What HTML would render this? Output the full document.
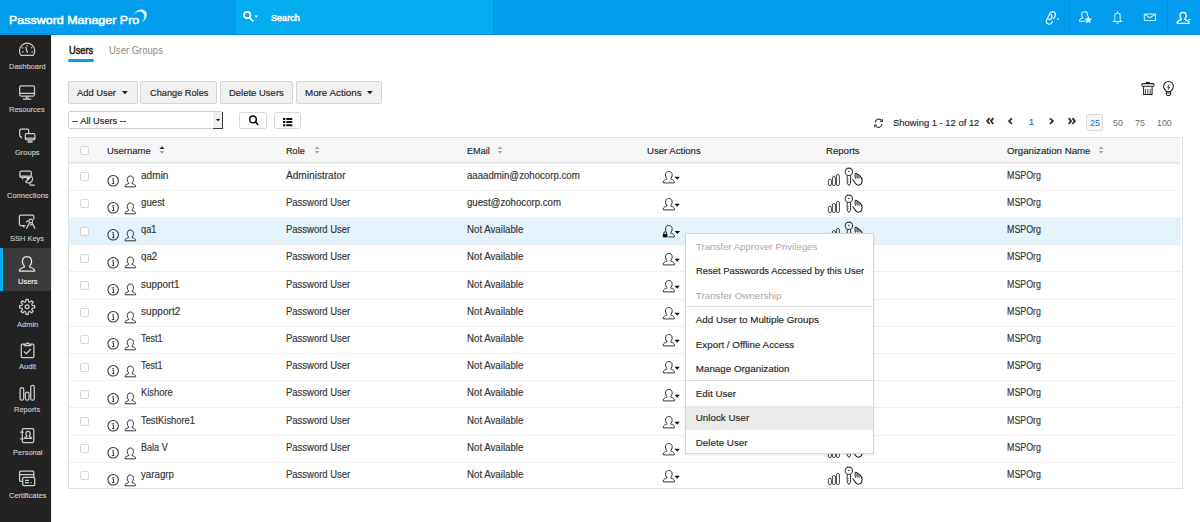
<!DOCTYPE html>
<html><head><meta charset="utf-8">
<style>
*{box-sizing:border-box;margin:0;padding:0}
html,body{width:1200px;height:522px;overflow:hidden;background:#fff;font-family:"Liberation Sans",sans-serif;color:#333}
.abs{position:absolute;white-space:nowrap}
svg{display:block}
.slab{left:0;width:51px;text-align:center;font-size:7.7px;line-height:8px}
.cb{position:absolute;width:9px;height:9px;border:1px solid #d6d6d6;border-radius:2px;background:#fff}
#menu{position:absolute;left:685px;top:233px;width:189px;height:221px;background:#fff;border:1px solid #d4d4d4;box-shadow:0 1px 2px rgba(0,0,0,.08)}
</style></head>
<body>
<div class="abs" style="left:0;top:0;width:1200px;height:35px;background:#039dee"></div>
<div class="abs" style="left:236px;top:0;width:257px;height:35px;background:#02aeef"></div>
<div class="abs" style="left:493px;top:0;width:1px;height:35px;background:#0895e0"></div>
<div class="abs" style="left:0;top:34px;width:1200px;height:1px;background:#0789dc"></div>
<div class="abs" style="left:8.70px;top:15px;font-size:11.3px;line-height:11.3px;transform:scaleX(1.1034);transform-origin:0 0;color:#fff;font-weight:normal;-webkit-text-stroke:0.5px #fff;">Password Manager Pro</div>
<svg class="abs" style="left:120px;top:0" width="40" height="35" viewBox="120 0 40 35"><path d="M133.4 14.6C135.8 10.5 141.5 8 145 10.8 148.2 13.3 147.2 18.8 142.4 22.2 144.6 18.8 145.2 15.2 142.8 12.8 140.5 10.6 136.5 11.4 133.4 14.6Z" fill="#dcf2fd"/></svg>
<svg class="abs" style="left:240px;top:8px" width="20" height="16" viewBox="240 8 20 16"><circle cx="247.2" cy="15.1" r="3.2" fill="none" stroke="#fff" stroke-width="1.6"/><path d="M249.8 17.8l3 3" stroke="#fff" stroke-width="1.9" stroke-linecap="round"/><path d="M254.5 15.6h3.2l-1.6 2.1z" fill="#fff"/></svg>
<div class="abs" style="left:271.00px;top:13px;font-size:9.8px;line-height:9.8px;transform:scaleX(0.9254);transform-origin:0 0;color:#fff;font-weight:normal;-webkit-text-stroke:0.5px #fff;">Search</div>
<!-- header right icons -->
<div class="abs" style="left:1069px;top:0;width:1px;height:34.5px;background:#0a90d8"></div>
<div class="abs" style="left:1166.5px;top:0;width:1px;height:34.5px;background:#0a90d8"></div>
<svg class="abs" style="left:1000px;top:0" width="200" height="35" viewBox="1000 0 200 35">
<g transform="translate(1050.9 17.9) rotate(28)"><path d="M2.8 -0.8V-3.9a2.8 2.8 0 0 0-5.6 0V3.9a2.8 2.8 0 0 0 5.6 0V2.5" fill="none" stroke="#fff" stroke-width="1.2" stroke-linecap="round"/><path d="M-1.2 -3.2Q1.4 -1.6 0.4 1.2 -0.4 3.2 -1.4 1.8" fill="none" stroke="#fff" stroke-width="1.1" stroke-linecap="round"/></g>
<path d="M1056.6 18.4h2.8l-1.4 1.6z" fill="#fff"/>
<path d="M1084.6 11.6c-1.8 0-2.9 1.4-2.9 3.2 0 1.2.5 2.1 1.1 2.7v.6c-1.7.6-3.3 1.2-3.3 2.5v.6h6" fill="none" stroke="#d6f0fc" stroke-width="1.05" stroke-linejoin="round"/>
<path d="M1084.6 11.6c1.8 0 2.9 1.4 2.9 3.2 0 .6-.1 1.1-.3 1.6" fill="none" stroke="#d6f0fc" stroke-width="1.05"/>
<path d="M1088.3 16l1.15 2.45 2.65.35-1.95 1.85.5 2.65-2.35-1.3-2.35 1.3.5-2.65-1.95-1.85 2.65-.35z" fill="#e4f5fd"/>
<path d="M1117.5 11.6v1M1114.8 20.4v-4.6a2.7 2.7 0 0 1 5.4 0v4.6l1.6 1H1113.2z" fill="none" stroke="#cdedfc" stroke-width="1.05" stroke-linejoin="round"/>
<path d="M1116.2 22.4a1.3 1 0 0 0 2.6 0" fill="none" stroke="#cdedfc" stroke-width="1"/>
<rect x="1144.3" y="13.9" width="11.2" height="6.6" rx=".6" fill="none" stroke="#c9ecfc" stroke-width="1.05"/>
<path d="M1144.6 14.2l5.2 3.6 5.2-3.6" fill="none" stroke="#c9ecfc" stroke-width="1.05"/>
<path d="M1183.1 12.3c-1.9 0-3.1 1.5-3.1 3.4 0 1.3.6 2.3 1.3 2.9v.9c-2 .7-4.2 1.4-4.2 3v.9h12v-.9c0-1.6-2.2-2.3-4.2-3v-.9c.7-.6 1.3-1.6 1.3-2.9 0-1.9-1.2-3.4-3.1-3.4z" fill="none" stroke="#fff" stroke-width="1.25" stroke-linejoin="round"/>
<path d="M1188.3 19.6h2.6" stroke="#fff" stroke-width="1"/>
</svg>
<div class="abs" style="left:0;top:35px;width:51px;height:487px;background:#222"></div>
<div class="abs" style="left:51px;top:34.5px;width:1px;height:488px;background:#ececec"></div>
<div class="abs" style="left:9.01px;top:63px;font-size:8.0px;line-height:8.0px;transform:scaleX(0.9350);transform-origin:0 0;color:#c9c9c9;font-weight:normal;-webkit-text-stroke:0.15px #c9c9c9;">Dashboard</div>
<div class="abs" style="left:9.42px;top:106px;font-size:8.0px;line-height:8.0px;transform:scaleX(0.9350);transform-origin:0 0;color:#c9c9c9;font-weight:normal;-webkit-text-stroke:0.15px #c9c9c9;">Resources</div>
<div class="abs" style="left:15.03px;top:149px;font-size:8.0px;line-height:8.0px;transform:scaleX(0.9350);transform-origin:0 0;color:#c9c9c9;font-weight:normal;-webkit-text-stroke:0.15px #c9c9c9;">Groups</div>
<div class="abs" style="left:6.51px;top:192px;font-size:8.0px;line-height:8.0px;transform:scaleX(0.9350);transform-origin:0 0;color:#c9c9c9;font-weight:normal;-webkit-text-stroke:0.15px #c9c9c9;">Connections</div>
<div class="abs" style="left:10.26px;top:235px;font-size:8.0px;line-height:8.0px;transform:scaleX(0.9350);transform-origin:0 0;color:#c9c9c9;font-weight:normal;-webkit-text-stroke:0.15px #c9c9c9;">SSH Keys</div>
<div class="abs" style="left:0;top:247.5px;width:51px;height:43px;background:#3b3b3b"></div>
<div class="abs" style="left:0;top:247.5px;width:3.2px;height:43px;background:#09adf0"></div>
<div class="abs" style="left:17.54px;top:278px;font-size:8.0px;line-height:8.0px;transform:scaleX(0.9350);transform-origin:0 0;color:#f4f4f4;font-weight:normal;-webkit-text-stroke:0.15px #f4f4f4;">Users</div>
<div class="abs" style="left:16.70px;top:321px;font-size:8.0px;line-height:8.0px;transform:scaleX(0.9350);transform-origin:0 0;color:#c9c9c9;font-weight:normal;-webkit-text-stroke:0.15px #c9c9c9;">Admin</div>
<div class="abs" style="left:18.77px;top:363px;font-size:8.0px;line-height:8.0px;transform:scaleX(0.9350);transform-origin:0 0;color:#c9c9c9;font-weight:normal;-webkit-text-stroke:0.15px #c9c9c9;">Audit</div>
<div class="abs" style="left:14.21px;top:406px;font-size:8.0px;line-height:8.0px;transform:scaleX(0.9350);transform-origin:0 0;color:#c9c9c9;font-weight:normal;-webkit-text-stroke:0.15px #c9c9c9;">Reports</div>
<div class="abs" style="left:12.55px;top:449px;font-size:8.0px;line-height:8.0px;transform:scaleX(0.9350);transform-origin:0 0;color:#c9c9c9;font-weight:normal;-webkit-text-stroke:0.15px #c9c9c9;">Personal</div>
<div class="abs" style="left:8.60px;top:492px;font-size:8.0px;line-height:8.0px;transform:scaleX(0.9350);transform-origin:0 0;color:#c9c9c9;font-weight:normal;-webkit-text-stroke:0.15px #c9c9c9;">Certificates</div>
<svg class="abs" style="left:0;top:0" width="51" height="522" viewBox="0 0 51 522"><path d="M21 55.3 A7.6 7.6 0 1 1 33.2 55.3 Z" fill="none" stroke="#cdcdcd" stroke-width="1.25" stroke-linecap="round" stroke-linejoin="round"/><path d="M25.9 47.4 L27.3 52.3" fill="none" stroke="#cdcdcd" stroke-width="1.25" stroke-linecap="round" stroke-linejoin="round" stroke-width="1.5"/><path d="M22.3 47.8h.6M31.3 47.8h.6M22.6 51.8h.6M31.8 51.8h.6M27.1 45.3v.5" fill="none" stroke="#cdcdcd" stroke-width="1.25" stroke-linecap="round" stroke-linejoin="round"/><rect x="19.7" y="85.9" width="14.8" height="10.2" rx="1.5" fill="none" stroke="#cdcdcd" stroke-width="1.25" stroke-linecap="round" stroke-linejoin="round"/><path d="M19.9 93.4h14.4M26.3 96.3v2M28 96.3v2M23.4 99h7.4" fill="none" stroke="#cdcdcd" stroke-width="1.25" stroke-linecap="round" stroke-linejoin="round"/><path d="M20.7 136.5 A1 1 0 0 1 19.7 135.5V130.4a1.3 1.3 0 0 1 1.3-1.3h6.4a1.3 1.3 0 0 1 1.3 1.3v2.6" fill="none" stroke="#cdcdcd" stroke-width="1.25" stroke-linecap="round" stroke-linejoin="round"/><path d="M20.8 136.6l.8 1.3" fill="none" stroke="#cdcdcd" stroke-width="1.25" stroke-linecap="round" stroke-linejoin="round"/><rect x="25.3" y="133.6" width="9.6" height="6.3" rx="1.3" fill="none" stroke="#cdcdcd" stroke-width="1.25" stroke-linecap="round" stroke-linejoin="round"/><path d="M25.5 138.2h9.2M29 140v1.8M31 140v1.8M27.8 142.2h4.5" fill="none" stroke="#cdcdcd" stroke-width="1.25" stroke-linecap="round" stroke-linejoin="round"/><rect x="19.9" y="171" width="11.4" height="6.3" rx="1.3" fill="none" stroke="#cdcdcd" stroke-width="1.25" stroke-linecap="round" stroke-linejoin="round"/><path d="M20.2 176h10.8" fill="none" stroke="#cdcdcd" stroke-width="1.25" stroke-linecap="round" stroke-linejoin="round" stroke-width="1.6"/><path d="M22.2 177.6l.6 1.4" fill="none" stroke="#cdcdcd" stroke-width="1.25" stroke-linecap="round" stroke-linejoin="round"/><path d="M31.4 176.1A4 4 0 0 1 25.7 181.8Z" fill="#222" stroke="#cdcdcd" stroke-width="1.25" stroke-linejoin="round"/><path d="M28.5 178.9L24.5 176.6" fill="none" stroke="#cdcdcd" stroke-width="1.25" stroke-linecap="round" stroke-linejoin="round"/><circle cx="28.5" cy="178.9" r=".8" fill="#eee"/><path d="M29.6 183.3l.7 1.9h4" fill="none" stroke="#cdcdcd" stroke-width="1.25" stroke-linecap="round" stroke-linejoin="round"/><path d="M25 225.5H20.6a1.2 1.2 0 0 1-1.2-1.2V216.4a1.2 1.2 0 0 1 1.2-1.2h12a1.2 1.2 0 0 1 1.2 1.2V219" fill="none" stroke="#cdcdcd" stroke-width="1.25" stroke-linecap="round" stroke-linejoin="round"/><path d="M22.5 225.5l1.6 1.6" fill="none" stroke="#cdcdcd" stroke-width="1.25" stroke-linecap="round" stroke-linejoin="round"/><circle cx="30.8" cy="221" r="1.8" fill="none" stroke="#cdcdcd" stroke-width="1.25" stroke-linecap="round" stroke-linejoin="round"/><path d="M29.6 222.6l-2.9 5.5M31.9 222.6l2.9 5.5M30.5 225.2l1.4-1" fill="none" stroke="#cdcdcd" stroke-width="1.25" stroke-linecap="round" stroke-linejoin="round"/><path d="M28 220.6l-1.5 1.4" fill="none" stroke="#cdcdcd" stroke-width="1.25" stroke-linecap="round" stroke-linejoin="round"/><path d="M27 256.7c-2.9 0-4.6 2.1-4.6 5 0 1.9.9 3.4 1.9 4.3v1c-2.6.8-4.9 1.8-4.9 3.6v.5h15.2v-.5c0-1.8-2.3-2.8-4.9-3.6v-1c1-.9 1.9-2.4 1.9-4.3 0-2.9-1.7-5-4.6-5z" fill="none" stroke="#e8e8e8" stroke-width="1.3" stroke-linejoin="round"/><path d="M25.76 301.57 L25.96 299.29 L28.24 299.29 L28.44 301.57 L29.85 302.15 L31.61 300.68 L33.22 302.29 L31.75 304.05 L32.33 305.46 L34.61 305.66 L34.61 307.94 L32.33 308.14 L31.75 309.55 L33.22 311.31 L31.61 312.92 L29.85 311.45 L28.44 312.03 L28.24 314.31 L25.96 314.31 L25.76 312.03 L24.35 311.45 L22.59 312.92 L20.98 311.31 L22.45 309.55 L21.87 308.14 L19.59 307.94 L19.59 305.66 L21.87 305.46 L22.45 304.05 L20.98 302.29 L22.59 300.68 L24.35 302.15Z" fill="none" stroke="#cdcdcd" stroke-width="1.25" stroke-linecap="round" stroke-linejoin="round"/><circle cx="27.1" cy="306.8" r="1.9" fill="none" stroke="#cdcdcd" stroke-width="1.25" stroke-linecap="round" stroke-linejoin="round"/><path d="M24.3 344.2h-2a1 1 0 0 0-1 1v11.3a1 1 0 0 0 1 1h10.6a1 1 0 0 0 1-1V345.2a1 1 0 0 0-1-1h-2" fill="none" stroke="#cdcdcd" stroke-width="1.25" stroke-linecap="round" stroke-linejoin="round"/><path d="M24.3 345.5V344.2h1.8l1.5-1.5 1.5 1.5h1.8v1.3z" fill="none" stroke="#cdcdcd" stroke-width="1.25" stroke-linecap="round" stroke-linejoin="round"/><path d="M24.2 351.8l2.1 1.9 4.1-4.2" fill="none" stroke="#cdcdcd" stroke-width="1.25" stroke-linecap="round" stroke-linejoin="round"/><rect x="20.1" y="387.6" width="3.6" height="12.6" rx="1.8" fill="none" stroke="#cdcdcd" stroke-width="1.25" stroke-linecap="round" stroke-linejoin="round"/><rect x="25.4" y="392" width="3.6" height="8.2" rx="1.8" fill="none" stroke="#cdcdcd" stroke-width="1.25" stroke-linecap="round" stroke-linejoin="round"/><rect x="30.7" y="385.3" width="3.6" height="14.9" rx="1.8" fill="none" stroke="#cdcdcd" stroke-width="1.25" stroke-linecap="round" stroke-linejoin="round"/><rect x="22.3" y="428.5" width="11.5" height="14" rx="1.2" fill="none" stroke="#cdcdcd" stroke-width="1.25" stroke-linecap="round" stroke-linejoin="round"/><path d="M20.6 432h2.6M20.6 438.8h2.6" fill="none" stroke="#cdcdcd" stroke-width="1.25" stroke-linecap="round" stroke-linejoin="round"/><path d="M28.1 431.4c-1.4 0-2.2 1-2.2 2.4 0 .9.4 1.6.9 2v.8c-1.2.4-2.3.9-2.3 1.8h7.2c0-.9-1.1-1.4-2.3-1.8v-.8c.5-.4.9-1.1.9-2 0-1.4-.8-2.4-2.2-2.4z" fill="none" stroke="#cdcdcd" stroke-width="1.25" stroke-linecap="round" stroke-linejoin="round"/><path d="M21.8 481.4h-1.2a1 1 0 0 1-1-1V472a1 1 0 0 1 1-1h12.2a1 1 0 0 1 1 1v5.2" fill="none" stroke="#cdcdcd" stroke-width="1.25" stroke-linecap="round" stroke-linejoin="round"/><path d="M19.8 474.6h13.8" fill="none" stroke="#cdcdcd" stroke-width="1.25" stroke-linecap="round" stroke-linejoin="round" stroke-width="1.6"/><rect x="22.7" y="477.4" width="12" height="8.1" rx="1" fill="none" stroke="#cdcdcd" stroke-width="1.25" stroke-linecap="round" stroke-linejoin="round"/><path d="M25.5 480.3h3M25.5 482.6h3" fill="none" stroke="#cdcdcd" stroke-width="1.25" stroke-linecap="round" stroke-linejoin="round"/><circle cx="31.2" cy="482.6" r=".7" fill="#cdcdcd"/></svg>
<div class="abs" style="left:68.80px;top:46px;font-size:10.2px;line-height:10.2px;transform:scaleX(0.9090);transform-origin:0 0;color:#1e1e1e;font-weight:normal;-webkit-text-stroke:0.5px #1e1e1e;">Users</div>
<div class="abs" style="left:68px;top:58.6px;width:26px;height:3px;border-radius:1.5px;background:#0b9ae8"></div>
<div class="abs" style="left:109.00px;top:46px;font-size:10.2px;line-height:10.2px;transform:scaleX(0.9337);transform-origin:0 0;color:#8a8a8a;font-weight:normal;">User Groups</div>
<div class="abs" style="left:68px;top:81.2px;width:69.7px;height:22.5px;background:#f0f0f0;border:1px solid #d5d5d5;border-radius:2px"></div>
<div class="abs" style="left:77.30px;top:88px;font-size:9.8px;line-height:9.8px;transform:scaleX(0.9543);transform-origin:0 0;color:#222;font-weight:normal;-webkit-text-stroke:0.15px #222;">Add User</div>
<svg class="abs" style="left:122.3px;top:91px" width="6" height="4" viewBox="0 0 6 4"><path d="M0 0h5.8L2.9 3.3z" fill="#1a1a1a"/></svg>
<div class="abs" style="left:140.2px;top:81.2px;width:76.5px;height:22.5px;background:#f0f0f0;border:1px solid #d5d5d5;border-radius:2px"></div>
<div class="abs" style="left:149.50px;top:88px;font-size:9.8px;line-height:9.8px;transform:scaleX(0.9399);transform-origin:0 0;color:#222;font-weight:normal;-webkit-text-stroke:0.15px #222;">Change Roles</div>
<div class="abs" style="left:220px;top:81.2px;width:73px;height:22.5px;background:#f0f0f0;border:1px solid #d5d5d5;border-radius:2px"></div>
<div class="abs" style="left:229.00px;top:88px;font-size:9.8px;line-height:9.8px;transform:scaleX(0.9674);transform-origin:0 0;color:#222;font-weight:normal;-webkit-text-stroke:0.15px #222;">Delete Users</div>
<div class="abs" style="left:296px;top:81.2px;width:86.4px;height:22.5px;background:#f0f0f0;border:1px solid #d5d5d5;border-radius:2px"></div>
<div class="abs" style="left:305.00px;top:88px;font-size:9.8px;line-height:9.8px;color:#222;font-weight:normal;-webkit-text-stroke:0.15px #222;">More Actions</div>
<svg class="abs" style="left:367.2px;top:91px" width="6" height="4" viewBox="0 0 6 4"><path d="M0 0h5.8L2.9 3.3z" fill="#1a1a1a"/></svg>
<div class="abs" style="left:68px;top:110.6px;width:155px;height:18.7px;border:1px solid #cfcfcf;border-radius:2px;background:#fff"></div>
<div class="abs" style="left:71.70px;top:117px;font-size:9.3px;line-height:9.3px;transform:scaleX(0.9951);transform-origin:0 0;color:#222;font-weight:normal;-webkit-text-stroke:0.15px #222;">-- All Users --</div>
<div class="abs" style="left:212.5px;top:111.5px;width:10.5px;height:17.5px;border-right:1.3px solid #3a3a3a;border-bottom:1.3px solid #3a3a3a;background:#efefef"></div>
<svg class="abs" style="left:215.5px;top:118.7px" width="5" height="3" viewBox="0 0 5 3"><path d="M0 0h4.2L2.1 2.2z" fill="#111"/></svg>
<div class="abs" style="left:239.4px;top:112px;width:28px;height:17px;border:1px solid #d8d8d8;border-radius:2.5px;background:#fff"></div>
<svg class="abs" style="left:247px;top:113px" width="14" height="14" viewBox="247 113 14 14"><circle cx="253" cy="119.4" r="3.3" fill="none" stroke="#111" stroke-width="1.5"/><path d="M255.4 121.8l2.3 2.6" stroke="#111" stroke-width="1.6" stroke-linecap="round"/></svg>
<div class="abs" style="left:274.3px;top:112px;width:27.1px;height:17px;border:1px solid #d8d8d8;border-radius:2.5px;background:#fff"></div>
<svg class="abs" style="left:280px;top:115px" width="15" height="14" viewBox="280 115 15 14"><path d="M283 118h2.3v2h-2.3zM283 121.1h2.3v2h-2.3zM283 124.2h2.3v2h-2.3zM286.3 118h6v2h-6zM286.3 121.1h6v2h-6zM286.3 124.2h6v2h-6z" fill="#111"/></svg>
<svg class="abs" style="left:1138px;top:78px" width="40" height="20" viewBox="1138 78 40 20"><rect x="1141.8" y="83.6" width="12.3" height="2.6" rx="1.2" fill="none" stroke="#222" stroke-width="1.05"/><rect x="1146" y="82" width="3.7" height="1.6" fill="#111"/><path d="M1143.6 86.5v8h8.5v-8" fill="none" stroke="#222" stroke-width="1.05" stroke-linejoin="round"/><path d="M1145.5 89v5M1147.85 89v5M1150.2 89v5" stroke="#555" stroke-width="1"/><path d="M1166.3 91.4c-.4-1.2-2.7-2.3-2.7-5a4.9 4.9 0 0 1 9.8 0c0 2.7-2.3 3.8-2.7 5z" fill="none" stroke="#222" stroke-width="1.05" stroke-linejoin="round"/><path d="M1166.3 91.4v2.7a1.3 1.3 0 0 0 1.3 1.3h1.8a1.3 1.3 0 0 0 1.3-1.3v-2.7M1166.3 93h4.4" fill="none" stroke="#222" stroke-width="1.05"/><path d="M1169.3 84.6l-1.6 2.6h1.8l-1.3 2.4" fill="none" stroke="#222" stroke-width="1"/></svg>
<svg class="abs" style="left:872px;top:116px" width="14" height="14" viewBox="872 116 14 14"><path d="M875.2 122.5a3.6 3.6 0 0 1 6.4-2M882 124a3.6 3.6 0 0 1-6.4 2" fill="none" stroke="#333" stroke-width="1.15"/><path d="M882.3 119v2.3h-2.3M874.7 127.3v-2.3h2.3" fill="none" stroke="#333" stroke-width="1.15"/></svg>
<div class="abs" style="left:892.80px;top:118px;font-size:9.8px;line-height:9.8px;transform:scaleX(0.9609);transform-origin:0 0;color:#262626;font-weight:normal;-webkit-text-stroke:0.15px #262626;">Showing 1 - 12 of 12</div>
<svg class="abs" style="left:984px;top:114px" width="96" height="14" viewBox="984 114 96 14"><path d="M989.6 118.2l-2.4 2.9 2.4 2.9M993.3 118.2l-2.4 2.9 2.4 2.9" fill="none" stroke="#333" stroke-width="1.9"/><path d="M1012 118.3l-3 2.8 3 2.8" fill="none" stroke="#333" stroke-width="1.8"/><path d="M1049.9 118.3l3 2.8-3 2.8" fill="none" stroke="#333" stroke-width="1.8"/><path d="M1068.7 118.2l2.4 2.9-2.4 2.9M1072.4 118.2l2.4 2.9-2.4 2.9" fill="none" stroke="#333" stroke-width="1.9"/></svg>
<div class="abs" style="left:1029.00px;top:118px;font-size:9px;line-height:9px;color:#2677bf;font-weight:normal;-webkit-text-stroke:0.2px #2677bf;">1</div>
<div class="abs" style="left:1085.6px;top:114px;width:17.7px;height:16.7px;border:1px solid #d9d9d9;border-radius:2px;background:#f6f6f6"></div>
<div class="abs" style="left:1090.00px;top:118px;font-size:9.5px;line-height:9.5px;transform:scaleX(0.9483);transform-origin:0 0;color:#2677bf;font-weight:normal;">25</div>
<div class="abs" style="left:1112.70px;top:118px;font-size:9.5px;line-height:9.5px;transform:scaleX(0.9483);transform-origin:0 0;color:#6f6f6f;font-weight:normal;">50</div>
<div class="abs" style="left:1134.70px;top:118px;font-size:9.5px;line-height:9.5px;transform:scaleX(0.9483);transform-origin:0 0;color:#6f6f6f;font-weight:normal;">75</div>
<div class="abs" style="left:1157.30px;top:118px;font-size:9.5px;line-height:9.5px;transform:scaleX(0.9266);transform-origin:0 0;color:#6f6f6f;font-weight:normal;">100</div>
<div class="abs" style="left:68.5px;top:137px;width:1111px;height:25.5px;background:#f6f6f6"></div>
<div class="abs" style="left:68.5px;top:162.50px;width:1111px;height:27.2px;background:#fff;border-top:1px solid #efefef"></div>
<div class="abs" style="left:68.5px;top:189.70px;width:1111px;height:27.2px;background:#fff;border-top:1px solid #efefef"></div>
<div class="abs" style="left:68.5px;top:216.90px;width:1112.5px;height:27.2px;background:#e4f3fb;border-top:1px solid #efefef"></div>
<div class="abs" style="left:68.5px;top:244.10px;width:1111px;height:27.2px;background:#fff;border-top:1px solid #efefef"></div>
<div class="abs" style="left:68.5px;top:271.30px;width:1111px;height:27.2px;background:#fff;border-top:1px solid #efefef"></div>
<div class="abs" style="left:68.5px;top:298.50px;width:1111px;height:27.2px;background:#fff;border-top:1px solid #efefef"></div>
<div class="abs" style="left:68.5px;top:325.70px;width:1111px;height:27.2px;background:#fff;border-top:1px solid #efefef"></div>
<div class="abs" style="left:68.5px;top:352.90px;width:1111px;height:27.2px;background:#fff;border-top:1px solid #efefef"></div>
<div class="abs" style="left:68.5px;top:380.10px;width:1111px;height:27.2px;background:#fff;border-top:1px solid #efefef"></div>
<div class="abs" style="left:68.5px;top:407.30px;width:1111px;height:27.2px;background:#fff;border-top:1px solid #efefef"></div>
<div class="abs" style="left:68.5px;top:434.50px;width:1111px;height:27.2px;background:#fff;border-top:1px solid #efefef"></div>
<div class="abs" style="left:68.5px;top:461.70px;width:1111px;height:27.2px;background:#fff;border-top:1px solid #efefef"></div>
<div class="cb" style="left:79.5px;top:172.10px"></div>
<div class="abs" style="left:107.3px;top:175.00px"><svg width="13" height="13" viewBox="0 0 13 13"><circle cx="6.15" cy="5.8" r="5.25" fill="none" stroke="#333" stroke-width="1.05"/><circle cx="6.15" cy="3.4" r=".7" fill="#333"/><path d="M5.3 4.9h1.1v3.6M5.1 8.6h2.3" fill="none" stroke="#333" stroke-width="1"/></svg></div>
<div class="abs" style="left:123.7px;top:174.50px"><svg width="13" height="13" viewBox="0 0 13 13"><path d="M6.35 1C4.4 1 3.2 2.6 3.2 4.6 3.2 6 3.8 7.2 4.6 7.9V8.6C2.6 9.2 1 10 1 11.3V11.8H11.7V11.3C11.7 10 10.1 9.2 8.1 8.6V7.9C8.9 7.2 9.5 6 9.5 4.6 9.5 2.6 8.3 1 6.35 1Z" fill="none" stroke="#333" stroke-width="1" stroke-linejoin="round"/></svg></div>
<div class="abs" style="left:140.60px;top:171px;font-size:10.0px;line-height:10.0px;transform:scaleX(1.0092);transform-origin:0 0;color:#333;font-weight:normal;-webkit-text-stroke:0.15px #333;">admin</div>
<div class="abs" style="left:286.40px;top:171px;font-size:10.0px;line-height:10.0px;transform:scaleX(1.0102);transform-origin:0 0;color:#333;font-weight:normal;-webkit-text-stroke:0.15px #333;">Administrator</div>
<div class="abs" style="left:466.60px;top:171px;font-size:10.0px;line-height:10.0px;transform:scaleX(0.9641);transform-origin:0 0;color:#333;font-weight:normal;-webkit-text-stroke:0.15px #333;">aaaadmin@zohocorp.com</div>
<div class="abs" style="left:662px;top:170.00px"><svg width="20" height="15" viewBox="0 0 20 15"><path d="M6.6 1.5C4.6 1.5 3.5 3.1 3.5 5.1 3.5 6.5 4.1 7.7 4.9 8.4V9.1C2.9 9.7 1.3 10.5 1.3 11.8V12.9H12.4V11.8C12.4 10.5 10.8 9.7 8.8 9.1V8.4C9.6 7.7 10.2 6.5 10.2 5.1 10.2 3.1 9.1 1.5 6.6 1.5Z" fill="none" stroke="#333" stroke-width="1" stroke-linejoin="round"/><path d="M12.5 6.8h5.3l-2.65 3z" fill="#111"/></svg></div>
<div class="abs" style="left:826.8px;top:167.00px"><svg width="40" height="22" viewBox="0 0 40 22"><rect x="1.4" y="12.3" width="3" height="6.3" rx="1.5" fill="none" stroke="#444" stroke-width="1"/><rect x="5.4" y="9.5" width="3" height="9.1" rx="1.5" fill="none" stroke="#444" stroke-width="1"/><rect x="9.4" y="7.5" width="3" height="11.1" rx="1.5" fill="none" stroke="#444" stroke-width="1"/><circle cx="21.9" cy="4.8" r="3.7" fill="none" stroke="#333" stroke-width="1.05"/><circle cx="21.8" cy="4.5" r=".75" fill="#333"/><path d="M20.2 8.5v7.6l1.7 2.4 1.7-2.4V8.5" fill="none" stroke="#333" stroke-width="1"/><path d="M21.5 12v1.2M21.5 14.4v1.2" stroke="#999" stroke-width=".9"/><path d="M25.6 12.3L28.6 16.6Q29.8 18.2 31.4 18.2Q35.1 18.2 35.1 13.6Q35.1 10.4 32.7 8.7L29.8 6.7Q28.2 5.8 28 7.4L28.4 11.6" fill="#fff" stroke="#222" stroke-width="1.05" stroke-linejoin="round"/><path d="M28.6 7.2L32.6 9.2 33.2 11.6 29 11.2z" fill="#aaa"/><path d="M29.8 7.6l.6 3.4M31.6 8.6l.6 2.8" stroke="#555" stroke-width=".8"/></svg></div>
<div class="abs" style="left:1007.00px;top:171px;font-size:10.0px;line-height:10.0px;transform:scaleX(0.8866);transform-origin:0 0;color:#333;font-weight:normal;-webkit-text-stroke:0.15px #333;">MSPOrg</div>
<div class="cb" style="left:79.5px;top:199.30px"></div>
<div class="abs" style="left:107.3px;top:202.20px"><svg width="13" height="13" viewBox="0 0 13 13"><circle cx="6.15" cy="5.8" r="5.25" fill="none" stroke="#333" stroke-width="1.05"/><circle cx="6.15" cy="3.4" r=".7" fill="#333"/><path d="M5.3 4.9h1.1v3.6M5.1 8.6h2.3" fill="none" stroke="#333" stroke-width="1"/></svg></div>
<div class="abs" style="left:123.7px;top:201.70px"><svg width="13" height="13" viewBox="0 0 13 13"><path d="M6.35 1C4.4 1 3.2 2.6 3.2 4.6 3.2 6 3.8 7.2 4.6 7.9V8.6C2.6 9.2 1 10 1 11.3V11.8H11.7V11.3C11.7 10 10.1 9.2 8.1 8.6V7.9C8.9 7.2 9.5 6 9.5 4.6 9.5 2.6 8.3 1 6.35 1Z" fill="none" stroke="#333" stroke-width="1" stroke-linejoin="round"/></svg></div>
<div class="abs" style="left:140.60px;top:198px;font-size:10.0px;line-height:10.0px;transform:scaleX(0.9734);transform-origin:0 0;color:#333;font-weight:normal;-webkit-text-stroke:0.15px #333;">guest</div>
<div class="abs" style="left:286.40px;top:198px;font-size:10.0px;line-height:10.0px;transform:scaleX(0.9469);transform-origin:0 0;color:#333;font-weight:normal;-webkit-text-stroke:0.15px #333;">Password User</div>
<div class="abs" style="left:466.60px;top:198px;font-size:10.0px;line-height:10.0px;transform:scaleX(0.9651);transform-origin:0 0;color:#333;font-weight:normal;-webkit-text-stroke:0.15px #333;">guest@zohocorp.com</div>
<div class="abs" style="left:662px;top:197.20px"><svg width="20" height="15" viewBox="0 0 20 15"><path d="M6.6 1.5C4.6 1.5 3.5 3.1 3.5 5.1 3.5 6.5 4.1 7.7 4.9 8.4V9.1C2.9 9.7 1.3 10.5 1.3 11.8V12.9H12.4V11.8C12.4 10.5 10.8 9.7 8.8 9.1V8.4C9.6 7.7 10.2 6.5 10.2 5.1 10.2 3.1 9.1 1.5 6.6 1.5Z" fill="none" stroke="#333" stroke-width="1" stroke-linejoin="round"/><path d="M12.5 6.8h5.3l-2.65 3z" fill="#111"/></svg></div>
<div class="abs" style="left:826.8px;top:194.20px"><svg width="40" height="22" viewBox="0 0 40 22"><rect x="1.4" y="12.3" width="3" height="6.3" rx="1.5" fill="none" stroke="#444" stroke-width="1"/><rect x="5.4" y="9.5" width="3" height="9.1" rx="1.5" fill="none" stroke="#444" stroke-width="1"/><rect x="9.4" y="7.5" width="3" height="11.1" rx="1.5" fill="none" stroke="#444" stroke-width="1"/><circle cx="21.9" cy="4.8" r="3.7" fill="none" stroke="#333" stroke-width="1.05"/><circle cx="21.8" cy="4.5" r=".75" fill="#333"/><path d="M20.2 8.5v7.6l1.7 2.4 1.7-2.4V8.5" fill="none" stroke="#333" stroke-width="1"/><path d="M21.5 12v1.2M21.5 14.4v1.2" stroke="#999" stroke-width=".9"/><path d="M25.6 12.3L28.6 16.6Q29.8 18.2 31.4 18.2Q35.1 18.2 35.1 13.6Q35.1 10.4 32.7 8.7L29.8 6.7Q28.2 5.8 28 7.4L28.4 11.6" fill="#fff" stroke="#222" stroke-width="1.05" stroke-linejoin="round"/><path d="M28.6 7.2L32.6 9.2 33.2 11.6 29 11.2z" fill="#aaa"/><path d="M29.8 7.6l.6 3.4M31.6 8.6l.6 2.8" stroke="#555" stroke-width=".8"/></svg></div>
<div class="abs" style="left:1007.00px;top:198px;font-size:10.0px;line-height:10.0px;transform:scaleX(0.8866);transform-origin:0 0;color:#333;font-weight:normal;-webkit-text-stroke:0.15px #333;">MSPOrg</div>
<div class="cb" style="left:79.5px;top:226.50px"></div>
<div class="abs" style="left:107.3px;top:229.40px"><svg width="13" height="13" viewBox="0 0 13 13"><circle cx="6.15" cy="5.8" r="5.25" fill="none" stroke="#333" stroke-width="1.05"/><circle cx="6.15" cy="3.4" r=".7" fill="#333"/><path d="M5.3 4.9h1.1v3.6M5.1 8.6h2.3" fill="none" stroke="#333" stroke-width="1"/></svg></div>
<div class="abs" style="left:123.7px;top:228.90px"><svg width="13" height="13" viewBox="0 0 13 13"><path d="M6.35 1C4.4 1 3.2 2.6 3.2 4.6 3.2 6 3.8 7.2 4.6 7.9V8.6C2.6 9.2 1 10 1 11.3V11.8H11.7V11.3C11.7 10 10.1 9.2 8.1 8.6V7.9C8.9 7.2 9.5 6 9.5 4.6 9.5 2.6 8.3 1 6.35 1Z" fill="none" stroke="#333" stroke-width="1" stroke-linejoin="round"/></svg></div>
<div class="abs" style="left:140.60px;top:225px;font-size:10.0px;line-height:10.0px;transform:scaleX(0.9222);transform-origin:0 0;color:#333;font-weight:normal;-webkit-text-stroke:0.15px #333;">qa1</div>
<div class="abs" style="left:286.40px;top:225px;font-size:10.0px;line-height:10.0px;transform:scaleX(0.9469);transform-origin:0 0;color:#333;font-weight:normal;-webkit-text-stroke:0.15px #333;">Password User</div>
<div class="abs" style="left:466.60px;top:225px;font-size:10.0px;line-height:10.0px;transform:scaleX(0.9691);transform-origin:0 0;color:#333;font-weight:normal;-webkit-text-stroke:0.15px #333;">Not Available</div>
<div class="abs" style="left:662px;top:224.40px"><svg width="20" height="15" viewBox="0 0 20 15"><path d="M6.6 1.5C4.6 1.5 3.5 3.1 3.5 5.1 3.5 6.5 4.1 7.7 4.9 8.4V9.1C2.9 9.7 1.3 10.5 1.3 11.8V12.9H12.4V11.8C12.4 10.5 10.8 9.7 8.8 9.1V8.4C9.6 7.7 10.2 6.5 10.2 5.1 10.2 3.1 9.1 1.5 6.6 1.5Z" fill="none" stroke="#333" stroke-width="1" stroke-linejoin="round"/><rect x="0" y="7.6" width="6.6" height="6" fill="#e4f3fb"/><path d="M1.9 10v-1a1.3 1.3 0 0 1 2.6 0v1" fill="none" stroke="#111" stroke-width="1"/><rect x=".8" y="10" width="4.7" height="3.3" rx=".3" fill="#111"/><path d="M12.6 7.1h5.6l-2.8 3z" fill="#111"/></svg></div>
<div class="abs" style="left:826.8px;top:221.40px"><svg width="40" height="22" viewBox="0 0 40 22"><rect x="1.4" y="12.3" width="3" height="6.3" rx="1.5" fill="none" stroke="#444" stroke-width="1"/><rect x="5.4" y="9.5" width="3" height="9.1" rx="1.5" fill="none" stroke="#444" stroke-width="1"/><rect x="9.4" y="7.5" width="3" height="11.1" rx="1.5" fill="none" stroke="#444" stroke-width="1"/><circle cx="21.9" cy="4.8" r="3.7" fill="none" stroke="#333" stroke-width="1.05"/><circle cx="21.8" cy="4.5" r=".75" fill="#333"/><path d="M20.2 8.5v7.6l1.7 2.4 1.7-2.4V8.5" fill="none" stroke="#333" stroke-width="1"/><path d="M21.5 12v1.2M21.5 14.4v1.2" stroke="#999" stroke-width=".9"/><path d="M25.6 12.3L28.6 16.6Q29.8 18.2 31.4 18.2Q35.1 18.2 35.1 13.6Q35.1 10.4 32.7 8.7L29.8 6.7Q28.2 5.8 28 7.4L28.4 11.6" fill="#fff" stroke="#222" stroke-width="1.05" stroke-linejoin="round"/><path d="M28.6 7.2L32.6 9.2 33.2 11.6 29 11.2z" fill="#aaa"/><path d="M29.8 7.6l.6 3.4M31.6 8.6l.6 2.8" stroke="#555" stroke-width=".8"/></svg></div>
<div class="abs" style="left:1007.00px;top:225px;font-size:10.0px;line-height:10.0px;transform:scaleX(0.8866);transform-origin:0 0;color:#333;font-weight:normal;-webkit-text-stroke:0.15px #333;">MSPOrg</div>
<div class="cb" style="left:79.5px;top:253.70px"></div>
<div class="abs" style="left:107.3px;top:256.60px"><svg width="13" height="13" viewBox="0 0 13 13"><circle cx="6.15" cy="5.8" r="5.25" fill="none" stroke="#333" stroke-width="1.05"/><circle cx="6.15" cy="3.4" r=".7" fill="#333"/><path d="M5.3 4.9h1.1v3.6M5.1 8.6h2.3" fill="none" stroke="#333" stroke-width="1"/></svg></div>
<div class="abs" style="left:123.7px;top:256.10px"><svg width="13" height="13" viewBox="0 0 13 13"><path d="M6.35 1C4.4 1 3.2 2.6 3.2 4.6 3.2 6 3.8 7.2 4.6 7.9V8.6C2.6 9.2 1 10 1 11.3V11.8H11.7V11.3C11.7 10 10.1 9.2 8.1 8.6V7.9C8.9 7.2 9.5 6 9.5 4.6 9.5 2.6 8.3 1 6.35 1Z" fill="none" stroke="#333" stroke-width="1" stroke-linejoin="round"/></svg></div>
<div class="abs" style="left:140.60px;top:252px;font-size:10.0px;line-height:10.0px;transform:scaleX(0.9760);transform-origin:0 0;color:#333;font-weight:normal;-webkit-text-stroke:0.15px #333;">qa2</div>
<div class="abs" style="left:286.40px;top:252px;font-size:10.0px;line-height:10.0px;transform:scaleX(0.9469);transform-origin:0 0;color:#333;font-weight:normal;-webkit-text-stroke:0.15px #333;">Password User</div>
<div class="abs" style="left:466.60px;top:252px;font-size:10.0px;line-height:10.0px;transform:scaleX(0.9691);transform-origin:0 0;color:#333;font-weight:normal;-webkit-text-stroke:0.15px #333;">Not Available</div>
<div class="abs" style="left:662px;top:251.60px"><svg width="20" height="15" viewBox="0 0 20 15"><path d="M6.6 1.5C4.6 1.5 3.5 3.1 3.5 5.1 3.5 6.5 4.1 7.7 4.9 8.4V9.1C2.9 9.7 1.3 10.5 1.3 11.8V12.9H12.4V11.8C12.4 10.5 10.8 9.7 8.8 9.1V8.4C9.6 7.7 10.2 6.5 10.2 5.1 10.2 3.1 9.1 1.5 6.6 1.5Z" fill="none" stroke="#333" stroke-width="1" stroke-linejoin="round"/><path d="M12.5 6.8h5.3l-2.65 3z" fill="#111"/></svg></div>
<div class="abs" style="left:826.8px;top:248.60px"><svg width="40" height="22" viewBox="0 0 40 22"><rect x="1.4" y="12.3" width="3" height="6.3" rx="1.5" fill="none" stroke="#444" stroke-width="1"/><rect x="5.4" y="9.5" width="3" height="9.1" rx="1.5" fill="none" stroke="#444" stroke-width="1"/><rect x="9.4" y="7.5" width="3" height="11.1" rx="1.5" fill="none" stroke="#444" stroke-width="1"/><circle cx="21.9" cy="4.8" r="3.7" fill="none" stroke="#333" stroke-width="1.05"/><circle cx="21.8" cy="4.5" r=".75" fill="#333"/><path d="M20.2 8.5v7.6l1.7 2.4 1.7-2.4V8.5" fill="none" stroke="#333" stroke-width="1"/><path d="M21.5 12v1.2M21.5 14.4v1.2" stroke="#999" stroke-width=".9"/><path d="M25.6 12.3L28.6 16.6Q29.8 18.2 31.4 18.2Q35.1 18.2 35.1 13.6Q35.1 10.4 32.7 8.7L29.8 6.7Q28.2 5.8 28 7.4L28.4 11.6" fill="#fff" stroke="#222" stroke-width="1.05" stroke-linejoin="round"/><path d="M28.6 7.2L32.6 9.2 33.2 11.6 29 11.2z" fill="#aaa"/><path d="M29.8 7.6l.6 3.4M31.6 8.6l.6 2.8" stroke="#555" stroke-width=".8"/></svg></div>
<div class="abs" style="left:1007.00px;top:252px;font-size:10.0px;line-height:10.0px;transform:scaleX(0.8866);transform-origin:0 0;color:#333;font-weight:normal;-webkit-text-stroke:0.15px #333;">MSPOrg</div>
<div class="cb" style="left:79.5px;top:280.90px"></div>
<div class="abs" style="left:107.3px;top:283.80px"><svg width="13" height="13" viewBox="0 0 13 13"><circle cx="6.15" cy="5.8" r="5.25" fill="none" stroke="#333" stroke-width="1.05"/><circle cx="6.15" cy="3.4" r=".7" fill="#333"/><path d="M5.3 4.9h1.1v3.6M5.1 8.6h2.3" fill="none" stroke="#333" stroke-width="1"/></svg></div>
<div class="abs" style="left:123.7px;top:283.30px"><svg width="13" height="13" viewBox="0 0 13 13"><path d="M6.35 1C4.4 1 3.2 2.6 3.2 4.6 3.2 6 3.8 7.2 4.6 7.9V8.6C2.6 9.2 1 10 1 11.3V11.8H11.7V11.3C11.7 10 10.1 9.2 8.1 8.6V7.9C8.9 7.2 9.5 6 9.5 4.6 9.5 2.6 8.3 1 6.35 1Z" fill="none" stroke="#333" stroke-width="1" stroke-linejoin="round"/></svg></div>
<div class="abs" style="left:140.60px;top:280px;font-size:10.0px;line-height:10.0px;transform:scaleX(0.9871);transform-origin:0 0;color:#333;font-weight:normal;-webkit-text-stroke:0.15px #333;">support1</div>
<div class="abs" style="left:286.40px;top:280px;font-size:10.0px;line-height:10.0px;transform:scaleX(0.9469);transform-origin:0 0;color:#333;font-weight:normal;-webkit-text-stroke:0.15px #333;">Password User</div>
<div class="abs" style="left:466.60px;top:280px;font-size:10.0px;line-height:10.0px;transform:scaleX(0.9691);transform-origin:0 0;color:#333;font-weight:normal;-webkit-text-stroke:0.15px #333;">Not Available</div>
<div class="abs" style="left:662px;top:278.80px"><svg width="20" height="15" viewBox="0 0 20 15"><path d="M6.6 1.5C4.6 1.5 3.5 3.1 3.5 5.1 3.5 6.5 4.1 7.7 4.9 8.4V9.1C2.9 9.7 1.3 10.5 1.3 11.8V12.9H12.4V11.8C12.4 10.5 10.8 9.7 8.8 9.1V8.4C9.6 7.7 10.2 6.5 10.2 5.1 10.2 3.1 9.1 1.5 6.6 1.5Z" fill="none" stroke="#333" stroke-width="1" stroke-linejoin="round"/><path d="M12.5 6.8h5.3l-2.65 3z" fill="#111"/></svg></div>
<div class="abs" style="left:826.8px;top:275.80px"><svg width="40" height="22" viewBox="0 0 40 22"><rect x="1.4" y="12.3" width="3" height="6.3" rx="1.5" fill="none" stroke="#444" stroke-width="1"/><rect x="5.4" y="9.5" width="3" height="9.1" rx="1.5" fill="none" stroke="#444" stroke-width="1"/><rect x="9.4" y="7.5" width="3" height="11.1" rx="1.5" fill="none" stroke="#444" stroke-width="1"/><circle cx="21.9" cy="4.8" r="3.7" fill="none" stroke="#333" stroke-width="1.05"/><circle cx="21.8" cy="4.5" r=".75" fill="#333"/><path d="M20.2 8.5v7.6l1.7 2.4 1.7-2.4V8.5" fill="none" stroke="#333" stroke-width="1"/><path d="M21.5 12v1.2M21.5 14.4v1.2" stroke="#999" stroke-width=".9"/><path d="M25.6 12.3L28.6 16.6Q29.8 18.2 31.4 18.2Q35.1 18.2 35.1 13.6Q35.1 10.4 32.7 8.7L29.8 6.7Q28.2 5.8 28 7.4L28.4 11.6" fill="#fff" stroke="#222" stroke-width="1.05" stroke-linejoin="round"/><path d="M28.6 7.2L32.6 9.2 33.2 11.6 29 11.2z" fill="#aaa"/><path d="M29.8 7.6l.6 3.4M31.6 8.6l.6 2.8" stroke="#555" stroke-width=".8"/></svg></div>
<div class="abs" style="left:1007.00px;top:280px;font-size:10.0px;line-height:10.0px;transform:scaleX(0.8866);transform-origin:0 0;color:#333;font-weight:normal;-webkit-text-stroke:0.15px #333;">MSPOrg</div>
<div class="cb" style="left:79.5px;top:308.10px"></div>
<div class="abs" style="left:107.3px;top:311.00px"><svg width="13" height="13" viewBox="0 0 13 13"><circle cx="6.15" cy="5.8" r="5.25" fill="none" stroke="#333" stroke-width="1.05"/><circle cx="6.15" cy="3.4" r=".7" fill="#333"/><path d="M5.3 4.9h1.1v3.6M5.1 8.6h2.3" fill="none" stroke="#333" stroke-width="1"/></svg></div>
<div class="abs" style="left:123.7px;top:310.50px"><svg width="13" height="13" viewBox="0 0 13 13"><path d="M6.35 1C4.4 1 3.2 2.6 3.2 4.6 3.2 6 3.8 7.2 4.6 7.9V8.6C2.6 9.2 1 10 1 11.3V11.8H11.7V11.3C11.7 10 10.1 9.2 8.1 8.6V7.9C8.9 7.2 9.5 6 9.5 4.6 9.5 2.6 8.3 1 6.35 1Z" fill="none" stroke="#333" stroke-width="1" stroke-linejoin="round"/></svg></div>
<div class="abs" style="left:140.60px;top:307px;font-size:10.0px;line-height:10.0px;transform:scaleX(1.0103);transform-origin:0 0;color:#333;font-weight:normal;-webkit-text-stroke:0.15px #333;">support2</div>
<div class="abs" style="left:286.40px;top:307px;font-size:10.0px;line-height:10.0px;transform:scaleX(0.9469);transform-origin:0 0;color:#333;font-weight:normal;-webkit-text-stroke:0.15px #333;">Password User</div>
<div class="abs" style="left:466.60px;top:307px;font-size:10.0px;line-height:10.0px;transform:scaleX(0.9691);transform-origin:0 0;color:#333;font-weight:normal;-webkit-text-stroke:0.15px #333;">Not Available</div>
<div class="abs" style="left:662px;top:306.00px"><svg width="20" height="15" viewBox="0 0 20 15"><path d="M6.6 1.5C4.6 1.5 3.5 3.1 3.5 5.1 3.5 6.5 4.1 7.7 4.9 8.4V9.1C2.9 9.7 1.3 10.5 1.3 11.8V12.9H12.4V11.8C12.4 10.5 10.8 9.7 8.8 9.1V8.4C9.6 7.7 10.2 6.5 10.2 5.1 10.2 3.1 9.1 1.5 6.6 1.5Z" fill="none" stroke="#333" stroke-width="1" stroke-linejoin="round"/><path d="M12.5 6.8h5.3l-2.65 3z" fill="#111"/></svg></div>
<div class="abs" style="left:826.8px;top:303.00px"><svg width="40" height="22" viewBox="0 0 40 22"><rect x="1.4" y="12.3" width="3" height="6.3" rx="1.5" fill="none" stroke="#444" stroke-width="1"/><rect x="5.4" y="9.5" width="3" height="9.1" rx="1.5" fill="none" stroke="#444" stroke-width="1"/><rect x="9.4" y="7.5" width="3" height="11.1" rx="1.5" fill="none" stroke="#444" stroke-width="1"/><circle cx="21.9" cy="4.8" r="3.7" fill="none" stroke="#333" stroke-width="1.05"/><circle cx="21.8" cy="4.5" r=".75" fill="#333"/><path d="M20.2 8.5v7.6l1.7 2.4 1.7-2.4V8.5" fill="none" stroke="#333" stroke-width="1"/><path d="M21.5 12v1.2M21.5 14.4v1.2" stroke="#999" stroke-width=".9"/><path d="M25.6 12.3L28.6 16.6Q29.8 18.2 31.4 18.2Q35.1 18.2 35.1 13.6Q35.1 10.4 32.7 8.7L29.8 6.7Q28.2 5.8 28 7.4L28.4 11.6" fill="#fff" stroke="#222" stroke-width="1.05" stroke-linejoin="round"/><path d="M28.6 7.2L32.6 9.2 33.2 11.6 29 11.2z" fill="#aaa"/><path d="M29.8 7.6l.6 3.4M31.6 8.6l.6 2.8" stroke="#555" stroke-width=".8"/></svg></div>
<div class="abs" style="left:1007.00px;top:307px;font-size:10.0px;line-height:10.0px;transform:scaleX(0.8866);transform-origin:0 0;color:#333;font-weight:normal;-webkit-text-stroke:0.15px #333;">MSPOrg</div>
<div class="cb" style="left:79.5px;top:335.30px"></div>
<div class="abs" style="left:107.3px;top:338.20px"><svg width="13" height="13" viewBox="0 0 13 13"><circle cx="6.15" cy="5.8" r="5.25" fill="none" stroke="#333" stroke-width="1.05"/><circle cx="6.15" cy="3.4" r=".7" fill="#333"/><path d="M5.3 4.9h1.1v3.6M5.1 8.6h2.3" fill="none" stroke="#333" stroke-width="1"/></svg></div>
<div class="abs" style="left:123.7px;top:337.70px"><svg width="13" height="13" viewBox="0 0 13 13"><path d="M6.35 1C4.4 1 3.2 2.6 3.2 4.6 3.2 6 3.8 7.2 4.6 7.9V8.6C2.6 9.2 1 10 1 11.3V11.8H11.7V11.3C11.7 10 10.1 9.2 8.1 8.6V7.9C8.9 7.2 9.5 6 9.5 4.6 9.5 2.6 8.3 1 6.35 1Z" fill="none" stroke="#333" stroke-width="1" stroke-linejoin="round"/></svg></div>
<div class="abs" style="left:140.60px;top:334px;font-size:10.0px;line-height:10.0px;transform:scaleX(0.8996);transform-origin:0 0;color:#333;font-weight:normal;-webkit-text-stroke:0.15px #333;">Test1</div>
<div class="abs" style="left:286.40px;top:334px;font-size:10.0px;line-height:10.0px;transform:scaleX(0.9469);transform-origin:0 0;color:#333;font-weight:normal;-webkit-text-stroke:0.15px #333;">Password User</div>
<div class="abs" style="left:466.60px;top:334px;font-size:10.0px;line-height:10.0px;transform:scaleX(0.9691);transform-origin:0 0;color:#333;font-weight:normal;-webkit-text-stroke:0.15px #333;">Not Available</div>
<div class="abs" style="left:662px;top:333.20px"><svg width="20" height="15" viewBox="0 0 20 15"><path d="M6.6 1.5C4.6 1.5 3.5 3.1 3.5 5.1 3.5 6.5 4.1 7.7 4.9 8.4V9.1C2.9 9.7 1.3 10.5 1.3 11.8V12.9H12.4V11.8C12.4 10.5 10.8 9.7 8.8 9.1V8.4C9.6 7.7 10.2 6.5 10.2 5.1 10.2 3.1 9.1 1.5 6.6 1.5Z" fill="none" stroke="#333" stroke-width="1" stroke-linejoin="round"/><path d="M12.5 6.8h5.3l-2.65 3z" fill="#111"/></svg></div>
<div class="abs" style="left:826.8px;top:330.20px"><svg width="40" height="22" viewBox="0 0 40 22"><rect x="1.4" y="12.3" width="3" height="6.3" rx="1.5" fill="none" stroke="#444" stroke-width="1"/><rect x="5.4" y="9.5" width="3" height="9.1" rx="1.5" fill="none" stroke="#444" stroke-width="1"/><rect x="9.4" y="7.5" width="3" height="11.1" rx="1.5" fill="none" stroke="#444" stroke-width="1"/><circle cx="21.9" cy="4.8" r="3.7" fill="none" stroke="#333" stroke-width="1.05"/><circle cx="21.8" cy="4.5" r=".75" fill="#333"/><path d="M20.2 8.5v7.6l1.7 2.4 1.7-2.4V8.5" fill="none" stroke="#333" stroke-width="1"/><path d="M21.5 12v1.2M21.5 14.4v1.2" stroke="#999" stroke-width=".9"/><path d="M25.6 12.3L28.6 16.6Q29.8 18.2 31.4 18.2Q35.1 18.2 35.1 13.6Q35.1 10.4 32.7 8.7L29.8 6.7Q28.2 5.8 28 7.4L28.4 11.6" fill="#fff" stroke="#222" stroke-width="1.05" stroke-linejoin="round"/><path d="M28.6 7.2L32.6 9.2 33.2 11.6 29 11.2z" fill="#aaa"/><path d="M29.8 7.6l.6 3.4M31.6 8.6l.6 2.8" stroke="#555" stroke-width=".8"/></svg></div>
<div class="abs" style="left:1007.00px;top:334px;font-size:10.0px;line-height:10.0px;transform:scaleX(0.8866);transform-origin:0 0;color:#333;font-weight:normal;-webkit-text-stroke:0.15px #333;">MSPOrg</div>
<div class="cb" style="left:79.5px;top:362.50px"></div>
<div class="abs" style="left:107.3px;top:365.40px"><svg width="13" height="13" viewBox="0 0 13 13"><circle cx="6.15" cy="5.8" r="5.25" fill="none" stroke="#333" stroke-width="1.05"/><circle cx="6.15" cy="3.4" r=".7" fill="#333"/><path d="M5.3 4.9h1.1v3.6M5.1 8.6h2.3" fill="none" stroke="#333" stroke-width="1"/></svg></div>
<div class="abs" style="left:123.7px;top:364.90px"><svg width="13" height="13" viewBox="0 0 13 13"><path d="M6.35 1C4.4 1 3.2 2.6 3.2 4.6 3.2 6 3.8 7.2 4.6 7.9V8.6C2.6 9.2 1 10 1 11.3V11.8H11.7V11.3C11.7 10 10.1 9.2 8.1 8.6V7.9C8.9 7.2 9.5 6 9.5 4.6 9.5 2.6 8.3 1 6.35 1Z" fill="none" stroke="#333" stroke-width="1" stroke-linejoin="round"/></svg></div>
<div class="abs" style="left:140.60px;top:361px;font-size:10.0px;line-height:10.0px;transform:scaleX(0.8996);transform-origin:0 0;color:#333;font-weight:normal;-webkit-text-stroke:0.15px #333;">Test1</div>
<div class="abs" style="left:286.40px;top:361px;font-size:10.0px;line-height:10.0px;transform:scaleX(0.9469);transform-origin:0 0;color:#333;font-weight:normal;-webkit-text-stroke:0.15px #333;">Password User</div>
<div class="abs" style="left:466.60px;top:361px;font-size:10.0px;line-height:10.0px;transform:scaleX(0.9691);transform-origin:0 0;color:#333;font-weight:normal;-webkit-text-stroke:0.15px #333;">Not Available</div>
<div class="abs" style="left:662px;top:360.40px"><svg width="20" height="15" viewBox="0 0 20 15"><path d="M6.6 1.5C4.6 1.5 3.5 3.1 3.5 5.1 3.5 6.5 4.1 7.7 4.9 8.4V9.1C2.9 9.7 1.3 10.5 1.3 11.8V12.9H12.4V11.8C12.4 10.5 10.8 9.7 8.8 9.1V8.4C9.6 7.7 10.2 6.5 10.2 5.1 10.2 3.1 9.1 1.5 6.6 1.5Z" fill="none" stroke="#333" stroke-width="1" stroke-linejoin="round"/><path d="M12.5 6.8h5.3l-2.65 3z" fill="#111"/></svg></div>
<div class="abs" style="left:826.8px;top:357.40px"><svg width="40" height="22" viewBox="0 0 40 22"><rect x="1.4" y="12.3" width="3" height="6.3" rx="1.5" fill="none" stroke="#444" stroke-width="1"/><rect x="5.4" y="9.5" width="3" height="9.1" rx="1.5" fill="none" stroke="#444" stroke-width="1"/><rect x="9.4" y="7.5" width="3" height="11.1" rx="1.5" fill="none" stroke="#444" stroke-width="1"/><circle cx="21.9" cy="4.8" r="3.7" fill="none" stroke="#333" stroke-width="1.05"/><circle cx="21.8" cy="4.5" r=".75" fill="#333"/><path d="M20.2 8.5v7.6l1.7 2.4 1.7-2.4V8.5" fill="none" stroke="#333" stroke-width="1"/><path d="M21.5 12v1.2M21.5 14.4v1.2" stroke="#999" stroke-width=".9"/><path d="M25.6 12.3L28.6 16.6Q29.8 18.2 31.4 18.2Q35.1 18.2 35.1 13.6Q35.1 10.4 32.7 8.7L29.8 6.7Q28.2 5.8 28 7.4L28.4 11.6" fill="#fff" stroke="#222" stroke-width="1.05" stroke-linejoin="round"/><path d="M28.6 7.2L32.6 9.2 33.2 11.6 29 11.2z" fill="#aaa"/><path d="M29.8 7.6l.6 3.4M31.6 8.6l.6 2.8" stroke="#555" stroke-width=".8"/></svg></div>
<div class="abs" style="left:1007.00px;top:361px;font-size:10.0px;line-height:10.0px;transform:scaleX(0.8866);transform-origin:0 0;color:#333;font-weight:normal;-webkit-text-stroke:0.15px #333;">MSPOrg</div>
<div class="cb" style="left:79.5px;top:389.70px"></div>
<div class="abs" style="left:107.3px;top:392.60px"><svg width="13" height="13" viewBox="0 0 13 13"><circle cx="6.15" cy="5.8" r="5.25" fill="none" stroke="#333" stroke-width="1.05"/><circle cx="6.15" cy="3.4" r=".7" fill="#333"/><path d="M5.3 4.9h1.1v3.6M5.1 8.6h2.3" fill="none" stroke="#333" stroke-width="1"/></svg></div>
<div class="abs" style="left:123.7px;top:392.10px"><svg width="13" height="13" viewBox="0 0 13 13"><path d="M6.35 1C4.4 1 3.2 2.6 3.2 4.6 3.2 6 3.8 7.2 4.6 7.9V8.6C2.6 9.2 1 10 1 11.3V11.8H11.7V11.3C11.7 10 10.1 9.2 8.1 8.6V7.9C8.9 7.2 9.5 6 9.5 4.6 9.5 2.6 8.3 1 6.35 1Z" fill="none" stroke="#333" stroke-width="1" stroke-linejoin="round"/></svg></div>
<div class="abs" style="left:140.60px;top:388px;font-size:10.0px;line-height:10.0px;transform:scaleX(0.9381);transform-origin:0 0;color:#333;font-weight:normal;-webkit-text-stroke:0.15px #333;">Kishore</div>
<div class="abs" style="left:286.40px;top:388px;font-size:10.0px;line-height:10.0px;transform:scaleX(0.9469);transform-origin:0 0;color:#333;font-weight:normal;-webkit-text-stroke:0.15px #333;">Password User</div>
<div class="abs" style="left:466.60px;top:388px;font-size:10.0px;line-height:10.0px;transform:scaleX(0.9691);transform-origin:0 0;color:#333;font-weight:normal;-webkit-text-stroke:0.15px #333;">Not Available</div>
<div class="abs" style="left:662px;top:387.60px"><svg width="20" height="15" viewBox="0 0 20 15"><path d="M6.6 1.5C4.6 1.5 3.5 3.1 3.5 5.1 3.5 6.5 4.1 7.7 4.9 8.4V9.1C2.9 9.7 1.3 10.5 1.3 11.8V12.9H12.4V11.8C12.4 10.5 10.8 9.7 8.8 9.1V8.4C9.6 7.7 10.2 6.5 10.2 5.1 10.2 3.1 9.1 1.5 6.6 1.5Z" fill="none" stroke="#333" stroke-width="1" stroke-linejoin="round"/><path d="M12.5 6.8h5.3l-2.65 3z" fill="#111"/></svg></div>
<div class="abs" style="left:826.8px;top:384.60px"><svg width="40" height="22" viewBox="0 0 40 22"><rect x="1.4" y="12.3" width="3" height="6.3" rx="1.5" fill="none" stroke="#444" stroke-width="1"/><rect x="5.4" y="9.5" width="3" height="9.1" rx="1.5" fill="none" stroke="#444" stroke-width="1"/><rect x="9.4" y="7.5" width="3" height="11.1" rx="1.5" fill="none" stroke="#444" stroke-width="1"/><circle cx="21.9" cy="4.8" r="3.7" fill="none" stroke="#333" stroke-width="1.05"/><circle cx="21.8" cy="4.5" r=".75" fill="#333"/><path d="M20.2 8.5v7.6l1.7 2.4 1.7-2.4V8.5" fill="none" stroke="#333" stroke-width="1"/><path d="M21.5 12v1.2M21.5 14.4v1.2" stroke="#999" stroke-width=".9"/><path d="M25.6 12.3L28.6 16.6Q29.8 18.2 31.4 18.2Q35.1 18.2 35.1 13.6Q35.1 10.4 32.7 8.7L29.8 6.7Q28.2 5.8 28 7.4L28.4 11.6" fill="#fff" stroke="#222" stroke-width="1.05" stroke-linejoin="round"/><path d="M28.6 7.2L32.6 9.2 33.2 11.6 29 11.2z" fill="#aaa"/><path d="M29.8 7.6l.6 3.4M31.6 8.6l.6 2.8" stroke="#555" stroke-width=".8"/></svg></div>
<div class="abs" style="left:1007.00px;top:388px;font-size:10.0px;line-height:10.0px;transform:scaleX(0.8866);transform-origin:0 0;color:#333;font-weight:normal;-webkit-text-stroke:0.15px #333;">MSPOrg</div>
<div class="cb" style="left:79.5px;top:416.90px"></div>
<div class="abs" style="left:107.3px;top:419.80px"><svg width="13" height="13" viewBox="0 0 13 13"><circle cx="6.15" cy="5.8" r="5.25" fill="none" stroke="#333" stroke-width="1.05"/><circle cx="6.15" cy="3.4" r=".7" fill="#333"/><path d="M5.3 4.9h1.1v3.6M5.1 8.6h2.3" fill="none" stroke="#333" stroke-width="1"/></svg></div>
<div class="abs" style="left:123.7px;top:419.30px"><svg width="13" height="13" viewBox="0 0 13 13"><path d="M6.35 1C4.4 1 3.2 2.6 3.2 4.6 3.2 6 3.8 7.2 4.6 7.9V8.6C2.6 9.2 1 10 1 11.3V11.8H11.7V11.3C11.7 10 10.1 9.2 8.1 8.6V7.9C8.9 7.2 9.5 6 9.5 4.6 9.5 2.6 8.3 1 6.35 1Z" fill="none" stroke="#333" stroke-width="1" stroke-linejoin="round"/></svg></div>
<div class="abs" style="left:140.60px;top:416px;font-size:10.0px;line-height:10.0px;transform:scaleX(0.9325);transform-origin:0 0;color:#333;font-weight:normal;-webkit-text-stroke:0.15px #333;">TestKishore1</div>
<div class="abs" style="left:286.40px;top:416px;font-size:10.0px;line-height:10.0px;transform:scaleX(0.9469);transform-origin:0 0;color:#333;font-weight:normal;-webkit-text-stroke:0.15px #333;">Password User</div>
<div class="abs" style="left:466.60px;top:416px;font-size:10.0px;line-height:10.0px;transform:scaleX(0.9691);transform-origin:0 0;color:#333;font-weight:normal;-webkit-text-stroke:0.15px #333;">Not Available</div>
<div class="abs" style="left:662px;top:414.80px"><svg width="20" height="15" viewBox="0 0 20 15"><path d="M6.6 1.5C4.6 1.5 3.5 3.1 3.5 5.1 3.5 6.5 4.1 7.7 4.9 8.4V9.1C2.9 9.7 1.3 10.5 1.3 11.8V12.9H12.4V11.8C12.4 10.5 10.8 9.7 8.8 9.1V8.4C9.6 7.7 10.2 6.5 10.2 5.1 10.2 3.1 9.1 1.5 6.6 1.5Z" fill="none" stroke="#333" stroke-width="1" stroke-linejoin="round"/><path d="M12.5 6.8h5.3l-2.65 3z" fill="#111"/></svg></div>
<div class="abs" style="left:826.8px;top:411.80px"><svg width="40" height="22" viewBox="0 0 40 22"><rect x="1.4" y="12.3" width="3" height="6.3" rx="1.5" fill="none" stroke="#444" stroke-width="1"/><rect x="5.4" y="9.5" width="3" height="9.1" rx="1.5" fill="none" stroke="#444" stroke-width="1"/><rect x="9.4" y="7.5" width="3" height="11.1" rx="1.5" fill="none" stroke="#444" stroke-width="1"/><circle cx="21.9" cy="4.8" r="3.7" fill="none" stroke="#333" stroke-width="1.05"/><circle cx="21.8" cy="4.5" r=".75" fill="#333"/><path d="M20.2 8.5v7.6l1.7 2.4 1.7-2.4V8.5" fill="none" stroke="#333" stroke-width="1"/><path d="M21.5 12v1.2M21.5 14.4v1.2" stroke="#999" stroke-width=".9"/><path d="M25.6 12.3L28.6 16.6Q29.8 18.2 31.4 18.2Q35.1 18.2 35.1 13.6Q35.1 10.4 32.7 8.7L29.8 6.7Q28.2 5.8 28 7.4L28.4 11.6" fill="#fff" stroke="#222" stroke-width="1.05" stroke-linejoin="round"/><path d="M28.6 7.2L32.6 9.2 33.2 11.6 29 11.2z" fill="#aaa"/><path d="M29.8 7.6l.6 3.4M31.6 8.6l.6 2.8" stroke="#555" stroke-width=".8"/></svg></div>
<div class="abs" style="left:1007.00px;top:416px;font-size:10.0px;line-height:10.0px;transform:scaleX(0.8866);transform-origin:0 0;color:#333;font-weight:normal;-webkit-text-stroke:0.15px #333;">MSPOrg</div>
<div class="cb" style="left:79.5px;top:444.10px"></div>
<div class="abs" style="left:107.3px;top:447.00px"><svg width="13" height="13" viewBox="0 0 13 13"><circle cx="6.15" cy="5.8" r="5.25" fill="none" stroke="#333" stroke-width="1.05"/><circle cx="6.15" cy="3.4" r=".7" fill="#333"/><path d="M5.3 4.9h1.1v3.6M5.1 8.6h2.3" fill="none" stroke="#333" stroke-width="1"/></svg></div>
<div class="abs" style="left:123.7px;top:446.50px"><svg width="13" height="13" viewBox="0 0 13 13"><path d="M6.35 1C4.4 1 3.2 2.6 3.2 4.6 3.2 6 3.8 7.2 4.6 7.9V8.6C2.6 9.2 1 10 1 11.3V11.8H11.7V11.3C11.7 10 10.1 9.2 8.1 8.6V7.9C8.9 7.2 9.5 6 9.5 4.6 9.5 2.6 8.3 1 6.35 1Z" fill="none" stroke="#333" stroke-width="1" stroke-linejoin="round"/></svg></div>
<div class="abs" style="left:140.60px;top:443px;font-size:10.0px;line-height:10.0px;transform:scaleX(0.9066);transform-origin:0 0;color:#333;font-weight:normal;-webkit-text-stroke:0.15px #333;">Bala V</div>
<div class="abs" style="left:286.40px;top:443px;font-size:10.0px;line-height:10.0px;transform:scaleX(0.9469);transform-origin:0 0;color:#333;font-weight:normal;-webkit-text-stroke:0.15px #333;">Password User</div>
<div class="abs" style="left:466.60px;top:443px;font-size:10.0px;line-height:10.0px;transform:scaleX(0.9691);transform-origin:0 0;color:#333;font-weight:normal;-webkit-text-stroke:0.15px #333;">Not Available</div>
<div class="abs" style="left:662px;top:442.00px"><svg width="20" height="15" viewBox="0 0 20 15"><path d="M6.6 1.5C4.6 1.5 3.5 3.1 3.5 5.1 3.5 6.5 4.1 7.7 4.9 8.4V9.1C2.9 9.7 1.3 10.5 1.3 11.8V12.9H12.4V11.8C12.4 10.5 10.8 9.7 8.8 9.1V8.4C9.6 7.7 10.2 6.5 10.2 5.1 10.2 3.1 9.1 1.5 6.6 1.5Z" fill="none" stroke="#333" stroke-width="1" stroke-linejoin="round"/><path d="M12.5 6.8h5.3l-2.65 3z" fill="#111"/></svg></div>
<div class="abs" style="left:826.8px;top:439.00px"><svg width="40" height="22" viewBox="0 0 40 22"><rect x="1.4" y="12.3" width="3" height="6.3" rx="1.5" fill="none" stroke="#444" stroke-width="1"/><rect x="5.4" y="9.5" width="3" height="9.1" rx="1.5" fill="none" stroke="#444" stroke-width="1"/><rect x="9.4" y="7.5" width="3" height="11.1" rx="1.5" fill="none" stroke="#444" stroke-width="1"/><circle cx="21.9" cy="4.8" r="3.7" fill="none" stroke="#333" stroke-width="1.05"/><circle cx="21.8" cy="4.5" r=".75" fill="#333"/><path d="M20.2 8.5v7.6l1.7 2.4 1.7-2.4V8.5" fill="none" stroke="#333" stroke-width="1"/><path d="M21.5 12v1.2M21.5 14.4v1.2" stroke="#999" stroke-width=".9"/><path d="M25.6 12.3L28.6 16.6Q29.8 18.2 31.4 18.2Q35.1 18.2 35.1 13.6Q35.1 10.4 32.7 8.7L29.8 6.7Q28.2 5.8 28 7.4L28.4 11.6" fill="#fff" stroke="#222" stroke-width="1.05" stroke-linejoin="round"/><path d="M28.6 7.2L32.6 9.2 33.2 11.6 29 11.2z" fill="#aaa"/><path d="M29.8 7.6l.6 3.4M31.6 8.6l.6 2.8" stroke="#555" stroke-width=".8"/></svg></div>
<div class="abs" style="left:1007.00px;top:443px;font-size:10.0px;line-height:10.0px;transform:scaleX(0.8866);transform-origin:0 0;color:#333;font-weight:normal;-webkit-text-stroke:0.15px #333;">MSPOrg</div>
<div class="cb" style="left:79.5px;top:471.30px"></div>
<div class="abs" style="left:107.3px;top:474.20px"><svg width="13" height="13" viewBox="0 0 13 13"><circle cx="6.15" cy="5.8" r="5.25" fill="none" stroke="#333" stroke-width="1.05"/><circle cx="6.15" cy="3.4" r=".7" fill="#333"/><path d="M5.3 4.9h1.1v3.6M5.1 8.6h2.3" fill="none" stroke="#333" stroke-width="1"/></svg></div>
<div class="abs" style="left:123.7px;top:473.70px"><svg width="13" height="13" viewBox="0 0 13 13"><path d="M6.35 1C4.4 1 3.2 2.6 3.2 4.6 3.2 6 3.8 7.2 4.6 7.9V8.6C2.6 9.2 1 10 1 11.3V11.8H11.7V11.3C11.7 10 10.1 9.2 8.1 8.6V7.9C8.9 7.2 9.5 6 9.5 4.6 9.5 2.6 8.3 1 6.35 1Z" fill="none" stroke="#333" stroke-width="1" stroke-linejoin="round"/></svg></div>
<div class="abs" style="left:140.60px;top:470px;font-size:10.0px;line-height:10.0px;transform:scaleX(0.9735);transform-origin:0 0;color:#333;font-weight:normal;-webkit-text-stroke:0.15px #333;">yaragrp</div>
<div class="abs" style="left:286.40px;top:470px;font-size:10.0px;line-height:10.0px;transform:scaleX(0.9469);transform-origin:0 0;color:#333;font-weight:normal;-webkit-text-stroke:0.15px #333;">Password User</div>
<div class="abs" style="left:466.60px;top:470px;font-size:10.0px;line-height:10.0px;transform:scaleX(0.9691);transform-origin:0 0;color:#333;font-weight:normal;-webkit-text-stroke:0.15px #333;">Not Available</div>
<div class="abs" style="left:662px;top:469.20px"><svg width="20" height="15" viewBox="0 0 20 15"><path d="M6.6 1.5C4.6 1.5 3.5 3.1 3.5 5.1 3.5 6.5 4.1 7.7 4.9 8.4V9.1C2.9 9.7 1.3 10.5 1.3 11.8V12.9H12.4V11.8C12.4 10.5 10.8 9.7 8.8 9.1V8.4C9.6 7.7 10.2 6.5 10.2 5.1 10.2 3.1 9.1 1.5 6.6 1.5Z" fill="none" stroke="#333" stroke-width="1" stroke-linejoin="round"/><path d="M12.5 6.8h5.3l-2.65 3z" fill="#111"/></svg></div>
<div class="abs" style="left:826.8px;top:466.20px"><svg width="40" height="22" viewBox="0 0 40 22"><rect x="1.4" y="12.3" width="3" height="6.3" rx="1.5" fill="none" stroke="#444" stroke-width="1"/><rect x="5.4" y="9.5" width="3" height="9.1" rx="1.5" fill="none" stroke="#444" stroke-width="1"/><rect x="9.4" y="7.5" width="3" height="11.1" rx="1.5" fill="none" stroke="#444" stroke-width="1"/><circle cx="21.9" cy="4.8" r="3.7" fill="none" stroke="#333" stroke-width="1.05"/><circle cx="21.8" cy="4.5" r=".75" fill="#333"/><path d="M20.2 8.5v7.6l1.7 2.4 1.7-2.4V8.5" fill="none" stroke="#333" stroke-width="1"/><path d="M21.5 12v1.2M21.5 14.4v1.2" stroke="#999" stroke-width=".9"/><path d="M25.6 12.3L28.6 16.6Q29.8 18.2 31.4 18.2Q35.1 18.2 35.1 13.6Q35.1 10.4 32.7 8.7L29.8 6.7Q28.2 5.8 28 7.4L28.4 11.6" fill="#fff" stroke="#222" stroke-width="1.05" stroke-linejoin="round"/><path d="M28.6 7.2L32.6 9.2 33.2 11.6 29 11.2z" fill="#aaa"/><path d="M29.8 7.6l.6 3.4M31.6 8.6l.6 2.8" stroke="#555" stroke-width=".8"/></svg></div>
<div class="abs" style="left:1007.00px;top:470px;font-size:10.0px;line-height:10.0px;transform:scaleX(0.8866);transform-origin:0 0;color:#333;font-weight:normal;-webkit-text-stroke:0.15px #333;">MSPOrg</div>
<div class="abs" style="left:68px;top:136.5px;width:1115px;height:352px;border:1px solid #e2e2e2;border-top:none"></div>
<div class="abs" style="left:68px;top:136.5px;width:1112px;height:1px;background:#e2e2e2"></div>
<div class="abs" style="left:68.5px;top:162px;width:1111px;height:1px;background:#e4e4e4"></div>
<div class="cb" style="left:79.8px;top:145.8px"></div>
<div class="abs" style="left:106.70px;top:146px;font-size:9.8px;line-height:9.8px;transform:scaleX(0.9684);transform-origin:0 0;color:#262626;font-weight:normal;-webkit-text-stroke:0.15px #262626;">Username</div>
<div class="abs" style="left:159px;top:144.8px"><svg width="6" height="10" viewBox="0 0 6 10"><path d="M.4 3.9L3 1.2 5.6 3.9z" fill="#2a2a2a"/><path d="M.6 6.1L3 8.7 5.4 6.1z" fill="#9a9a9a"/></svg></div>
<div class="abs" style="left:286.30px;top:146px;font-size:9.8px;line-height:9.8px;transform:scaleX(0.9285);transform-origin:0 0;color:#262626;font-weight:normal;-webkit-text-stroke:0.15px #262626;">Role</div>
<div class="abs" style="left:313.6px;top:144.6px"><svg width="6" height="10" viewBox="0 0 6 10"><path d="M.6 4L3 1.2 5.4 4zM.6 6L3 8.8 5.4 6z" fill="#aaa"/></svg></div>
<div class="abs" style="left:466.50px;top:146px;font-size:9.8px;line-height:9.8px;transform:scaleX(0.9306);transform-origin:0 0;color:#262626;font-weight:normal;-webkit-text-stroke:0.15px #262626;">EMail</div>
<div class="abs" style="left:497.4px;top:144.6px"><svg width="6" height="10" viewBox="0 0 6 10"><path d="M.6 4L3 1.2 5.4 4zM.6 6L3 8.8 5.4 6z" fill="#aaa"/></svg></div>
<div class="abs" style="left:646.80px;top:146px;font-size:9.8px;line-height:9.8px;transform:scaleX(0.9759);transform-origin:0 0;color:#262626;font-weight:normal;-webkit-text-stroke:0.15px #262626;">User Actions</div>
<div class="abs" style="left:826.40px;top:146px;font-size:9.8px;line-height:9.8px;transform:scaleX(0.9796);transform-origin:0 0;color:#262626;font-weight:normal;-webkit-text-stroke:0.15px #262626;">Reports</div>
<div class="abs" style="left:1006.50px;top:146px;font-size:9.8px;line-height:9.8px;transform:scaleX(0.9890);transform-origin:0 0;color:#262626;font-weight:normal;-webkit-text-stroke:0.15px #262626;">Organization Name</div>
<div class="abs" style="left:1097.6px;top:144.6px"><svg width="6" height="10" viewBox="0 0 6 10"><path d="M.6 4L3 1.2 5.4 4zM.6 6L3 8.8 5.4 6z" fill="#aaa"/></svg></div>
<div id="menu"></div>
<div class="abs" style="left:695.80px;top:242px;font-size:9.8px;line-height:9.8px;transform:scaleX(0.9839);transform-origin:0 0;color:#a9a9a9;font-weight:normal;">Transfer Approver Privileges</div>
<div class="abs" style="left:695.80px;top:266px;font-size:9.8px;line-height:9.8px;transform:scaleX(0.9585);transform-origin:0 0;color:#262626;font-weight:normal;-webkit-text-stroke:0.15px #262626;">Reset Passwords Accessed by this User</div>
<div class="abs" style="left:695.80px;top:291px;font-size:9.8px;line-height:9.8px;color:#a9a9a9;font-weight:normal;">Transfer Ownership</div>
<div class="abs" style="left:686px;width:187px;top:306.3px;height:1px;background:#dedede"></div>
<div class="abs" style="left:695.80px;top:315px;font-size:9.8px;line-height:9.8px;color:#262626;font-weight:normal;-webkit-text-stroke:0.15px #262626;">Add User to Multiple Groups</div>
<div class="abs" style="left:695.80px;top:340px;font-size:9.8px;line-height:9.8px;color:#262626;font-weight:normal;-webkit-text-stroke:0.15px #262626;">Export / Offline Access</div>
<div class="abs" style="left:695.80px;top:364px;font-size:9.8px;line-height:9.8px;color:#262626;font-weight:normal;-webkit-text-stroke:0.15px #262626;">Manage Organization</div>
<div class="abs" style="left:686px;width:187px;top:380.1px;height:1px;background:#dedede"></div>
<div class="abs" style="left:695.80px;top:389px;font-size:9.8px;line-height:9.8px;color:#262626;font-weight:normal;-webkit-text-stroke:0.15px #262626;">Edit User</div>
<div class="abs" style="left:686px;width:187px;top:406px;height:23.6px;background:#ebebeb"></div>
<div class="abs" style="left:695.80px;top:413px;font-size:9.8px;line-height:9.8px;color:#262626;font-weight:normal;-webkit-text-stroke:0.15px #262626;">Unlock User</div>
<div class="abs" style="left:695.80px;top:438px;font-size:9.8px;line-height:9.8px;color:#262626;font-weight:normal;-webkit-text-stroke:0.15px #262626;">Delete User</div>
</body></html>
